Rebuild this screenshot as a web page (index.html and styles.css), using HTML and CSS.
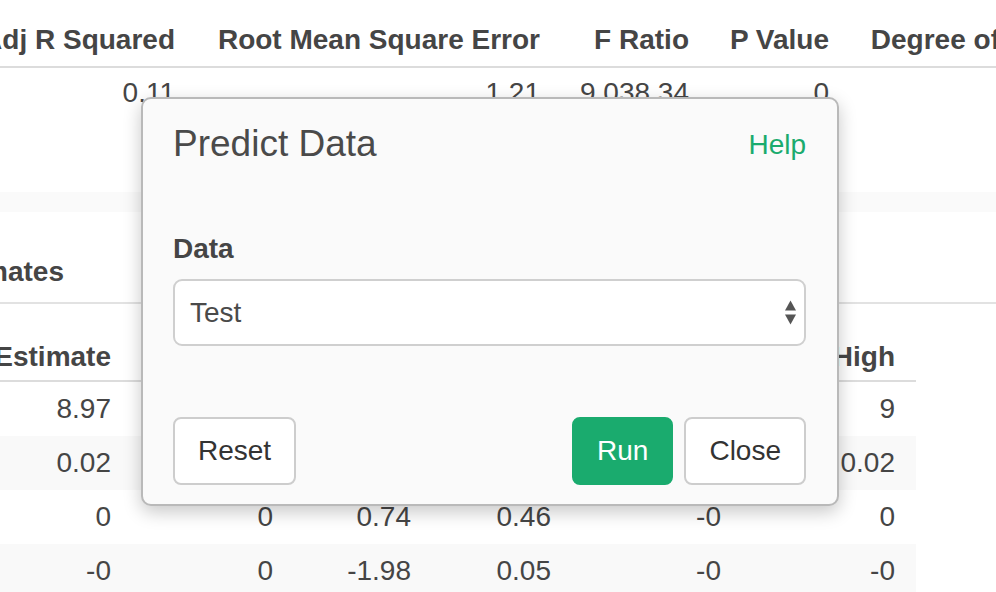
FILE: index.html
```html
<!DOCTYPE html>
<html>
<head>
<meta charset="utf-8">
<link rel="stylesheet" href="styles.css">
</head>
<body>
<div class="page">
  <div class="summary">
    <div class="row head">
      <div class="cell s1">Adj R Squared</div>
      <div class="cell s2">Root Mean Square Error</div>
      <div class="cell s3">F Ratio</div>
      <div class="cell s4">P Value</div>
      <div class="cell s5">Degree of Freedom</div>
    </div>
    <div class="row data">
      <div class="cell s1">0.11</div>
      <div class="cell s2">1.21</div>
      <div class="cell s3">9,038.34</div>
      <div class="cell s4">0</div>
      <div class="cell s5"></div>
    </div>
  </div>
  <div class="band"></div>
  <div class="section-title"><div class="title-text">Parameter Estimates</div></div>
  <div class="coef">
    <div class="row head">
      <div class="cell k1">Estimate</div>
      <div class="cell k2">Std Error</div>
      <div class="cell k3">t Ratio</div>
      <div class="cell k4">P Value</div>
      <div class="cell k5">Conf Low</div>
      <div class="cell k6">Conf High</div>
    </div>
    <div class="row">
      <div class="cell k1">8.97</div>
      <div class="cell k2">0.02</div>
      <div class="cell k3">429.71</div>
      <div class="cell k4">0</div>
      <div class="cell k5">8.93</div>
      <div class="cell k6">9</div>
    </div>
    <div class="row">
      <div class="cell k1">0.02</div>
      <div class="cell k2">0</div>
      <div class="cell k3">4.51</div>
      <div class="cell k4">0</div>
      <div class="cell k5">0.01</div>
      <div class="cell k6">0.02</div>
    </div>
    <div class="row">
      <div class="cell k1">0</div>
      <div class="cell k2">0</div>
      <div class="cell k3">0.74</div>
      <div class="cell k4">0.46</div>
      <div class="cell k5">-0</div>
      <div class="cell k6">0</div>
    </div>
    <div class="row">
      <div class="cell k1">-0</div>
      <div class="cell k2">0</div>
      <div class="cell k3">-1.98</div>
      <div class="cell k4">0.05</div>
      <div class="cell k5">-0</div>
      <div class="cell k6">-0</div>
    </div>
  </div>

  <div class="modal">
    <div class="modal-header">
      <h4 class="modal-title">Predict Data</h4>
      <a class="help">Help</a>
    </div>
    <div class="modal-body">
      <label class="field-label">Data</label>
      <div class="select">
        <span>Test</span>
        <svg class="arrows" width="11" height="26" viewBox="0 0 11 26">
          <polygon points="5.5,0.5 11,10.5 0,10.5" fill="#555"/>
          <polygon points="0,14.5 11,14.5 5.5,24.5" fill="#555"/>
        </svg>
      </div>
    </div>
    <div class="modal-footer">
      <button class="btn">Reset</button>
      <div class="btn-group">
        <button class="btn btn-primary">Run</button>
        <button class="btn">Close</button>
      </div>
    </div>
  </div>
</div>
</body>
</html>
```
FILE: styles.css
```css
html, body {
  margin: 0;
  width: 996px;
  height: 592px;
  overflow: hidden;
}
body {
  font-family: "Liberation Sans", Arial, sans-serif;
  font-size: 28px;
  line-height: 40px;
  color: #454545;
  background: #fff;
}
.page {
  position: relative;
  width: 996px;
  height: 592px;
  overflow: hidden;
}
.row {
  display: flex;
}
.cell {
  flex: 0 0 auto;
  display: flex;
  justify-content: flex-end;
  padding: 0 21px;
  white-space: nowrap;
  box-sizing: border-box;
}
.head .cell {
  font-weight: bold;
}

/* summary table */
.summary {
  height: 192px;
}
.summary .head {
  border-bottom: 2px solid #dcdcdc;
}
.summary .head .cell {
  padding-top: 20px;
  padding-bottom: 6px;
}
.summary .data .cell {
  padding-top: 5px;
}
.s1 { width: 196px; }
.s2 { width: 365px; }
.s3 { width: 149px; }
.s4 { width: 140px; }
.s5 { width: 297px; }

.band {
  height: 20px;
  background: #fafafa;
}

.section-title {
  display: flex;
  padding: 40px 0 10px;
  border-bottom: 2px solid #e2e2e2;
  font-weight: bold;
}
.title-text {
  width: 64px;
  display: flex;
  justify-content: flex-end;
  white-space: nowrap;
}

/* coefficient table */
.coef {
  width: 916px;
}
.coef .head {
  border-bottom: 2px solid #dcdcdc;
}
.coef .head .cell {
  padding-top: 33px;
  padding-bottom: 3px;
}
.coef .row:not(.head) .cell {
  padding-top: 7px;
  padding-bottom: 7px;
}
.coef .row:nth-child(odd):not(.head) {
  background: #f9f9f9;
}
.k1 { width: 132px; }
.k2 { width: 162px; }
.k3 { width: 138px; }
.k4 { width: 140px; }
.k5 { width: 170px; }
.k6 { width: 174px; }

/* modal */
.modal {
  position: absolute;
  left: 141px;
  top: 97px;
  width: 698px;
  height: 409px;
  box-sizing: border-box;
  border: 2px solid #b9b9b9;
  border-radius: 10px;
  background: #fafafa;
  box-shadow: 0 6px 18px rgba(0, 0, 0, 0.22);
  padding: 0 31px 0 30px;
  display: flex;
  flex-direction: column;
}
.modal-header {
  display: flex;
  justify-content: space-between;
  align-items: baseline;
  padding-top: 24px;
}
.modal-title {
  margin: 0;
  font-size: 37px;
  line-height: 41px;
  font-weight: normal;
  color: #4a4a4a;
}
.help {
  color: #1aab6e;
  position: relative;
  top: -2px;
}
.modal-body {
  display: flex;
  flex-direction: column;
  padding-top: 62px;
}
.field-label {
  font-weight: bold;
  color: #454545;
  margin-bottom: 10px;
}
.select {
  height: 67px;
  box-sizing: border-box;
  border: 2px solid #cfcfcf;
  border-radius: 9px;
  background: #fff;
  display: flex;
  align-items: center;
  justify-content: space-between;
  padding: 0 8px 0 15px;
  color: #4a4a4a;
}
.arrows {
  display: block;
}
.modal-footer {
  display: flex;
  margin-top: 71px;
}
.btn-group {
  display: flex;
  gap: 11px;
  margin-left: auto;
}
.btn {
  height: 68px;
  box-sizing: border-box;
  border: 2px solid #cdcdcd;
  border-radius: 8px;
  background: #fff;
  color: #333;
  font: inherit;
  font-size: 28px;
  padding: 0 23px;
}
.btn-primary {
  background: #1aab6e;
  border-color: #1aab6e;
  color: #fff;
}
```
